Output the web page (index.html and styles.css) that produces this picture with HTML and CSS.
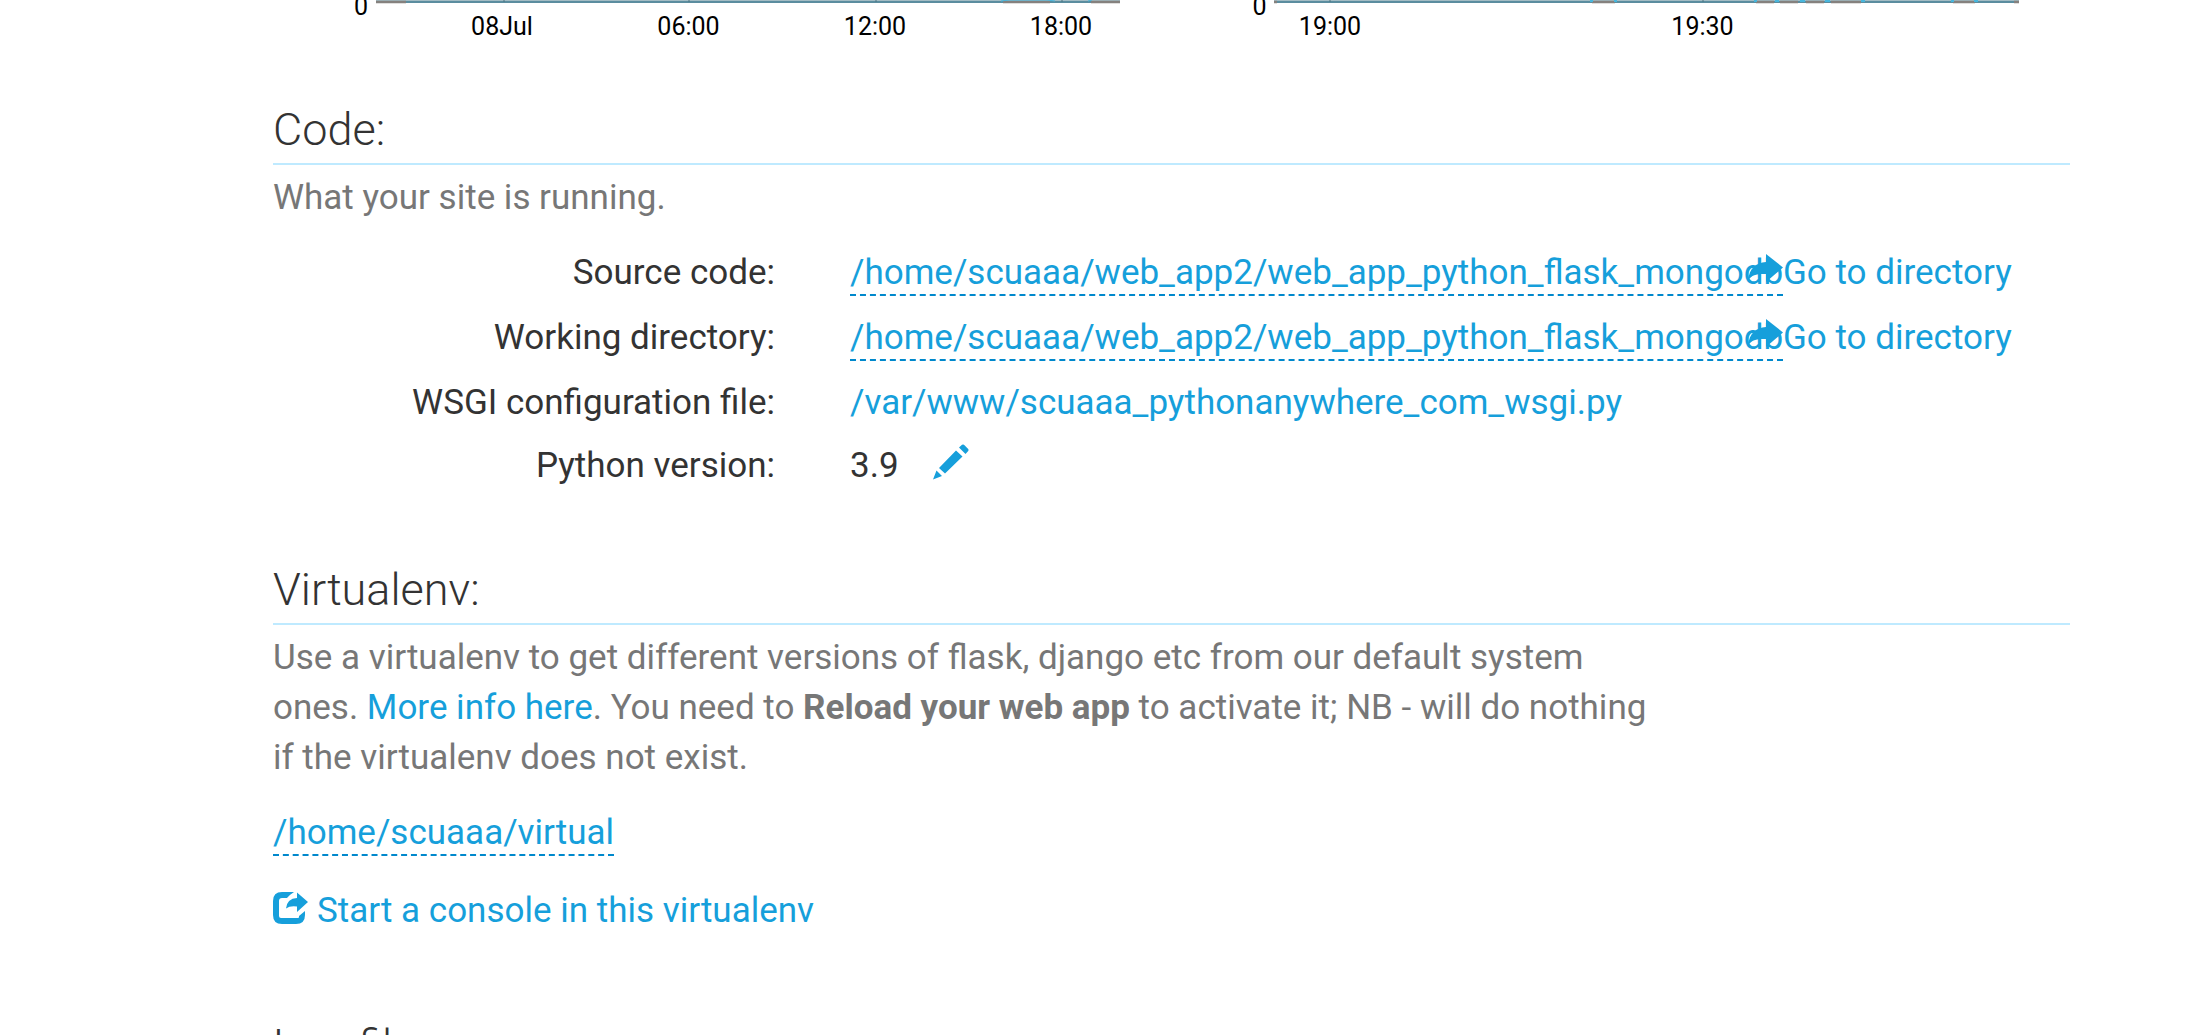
FILE: index.html
```html
<!DOCTYPE html>
<html lang="en">
<head>
<meta charset="utf-8">
<title>Web app configuration</title>
<link rel="stylesheet" href="styles.css">
</head>
<body>
<svg class="sprite" aria-hidden="true">
  <symbol id="arrow" viewBox="0 0 35 30"><path d="M18 1L35 14.500L18 29V21C10 20.500 4 21.500 .3 27C1 15.500 8 9.500 18 9Z"/></symbol>
</svg>
<main class="page">
  <div class="charts">
    <svg class="chart" width="898" height="50" viewBox="273 0 898 50">
      <rect x="376" y="0" width="744" height="1.200" fill="#a3bcc4"/>
      <rect x="376" y="1" width="744" height="2" fill="#5b8d9f"/>
      <path d="M376 2H406M1003 2H1050M1091 2H1120" stroke="#85817e" stroke-width="2.500"/>
      <path d="M1001 1l8-1h38l8 1M1088 1l4-1" stroke="#48b6dc" fill="none"/>
      <path d="M504 0v2M689 0v2M876 0v2M1062 0v2" stroke="#4d7482"/>
      <text x="361" y="15">0</text>
      <text x="502" y="35">08Jul</text>
      <text x="688.500" y="35">06:00</text>
      <text x="875" y="35">12:00</text>
      <text x="1061" y="35">18:00</text>
    </svg>
    <svg class="chart" width="899" height="50" viewBox="1171 0 899 50">
      <rect x="1274" y="0" width="745" height="1.200" fill="#a3bcc4"/>
      <rect x="1274" y="1" width="745" height="2" fill="#5b8d9f"/>
      <path d="M1274 2h3M1592 2h23M1756 2h18M1780 2h18M1806 2h18M1831 2h30M1953 2h22M2014 2h5" stroke="#85817e" stroke-width="2.500"/>
      <path d="M1754 1h3M1775 1h4M1800 1h5M1825 1h5M1861 1h4M1590 1h3M1614 1h3M1951 1h3M1974 1h4" stroke="#48b6dc" stroke-width="2"/>
      <path d="M1330 0v2M1703 0v2" stroke="#4d7482"/>
      <text x="1259.500" y="15">0</text>
      <text x="1330" y="35">19:00</text>
      <text x="1702.500" y="35">19:30</text>
    </svg>
  </div>

  <section class="code">
    <h2>Code:</h2>
    <p class="muted">What your site is running.</p>
    <div class="row">
      <span class="label">Source code:</span>
      <a class="value path editable">/home/scuaaa/web_app2/web_app_python_flask_mongodb</a>
      <a class="goto"><svg class="arrow"><use href="#arrow"/></svg><span>Go to directory</span></a>
    </div>
    <div class="row">
      <span class="label">Working directory:</span>
      <a class="value path editable">/home/scuaaa/web_app2/web_app_python_flask_mongodb</a>
      <a class="goto"><svg class="arrow"><use href="#arrow"/></svg><span>Go to directory</span></a>
    </div>
    <div class="row wsgi">
      <span class="label">WSGI configuration file:</span>
      <a class="value">/var/www/scuaaa_pythonanywhere_com_wsgi.py</a>
    </div>
    <div class="row">
      <span class="label">Python version:</span>
      <span class="value">3.9</span>
      <svg class="pencil" viewBox="0 0 36 36"><path d="M0 35.500L3.500 26.500L9 32ZM6 24L23 6.500L29.500 12.500L12 29.500ZM26 3.500L29 .8Q30 0 31 .8L35.200 5Q36 6 35.200 7L32.500 10Z"/></svg>
    </div>
  </section>

  <section class="virtualenv">
    <h2>Virtualenv:</h2>
    <p class="muted">Use a virtualenv to get different versions of flask, django etc from our default system<br>ones. <a>More info here</a>. You need to <strong>Reload your web app</strong> to activate it; NB - will do nothing<br>if the virtualenv does not exist.</p>
    <p class="env"><a class="editable">/home/scuaaa/virtual</a></p>
    <a class="console"><svg class="share" viewBox="0 0 35 32"><path d="M21 0H9Q0 0 0 9V23Q0 32 9 32H23Q32 32 32 23V19L26 24V25Q26 26 25 26H8Q6 26 6 24V9Q6 6 9 6H14Q17 2.500 21 0ZM24 .500L35 10L24 20V14.500Q17 13.500 13 16.500Q14 6.500 24 6Z"/></svg><span>Start a console in this virtualenv</span></a>
  </section>

  <section class="logs">
    <h2>Log files:</h2>
  </section>
</main>
</body>
</html>
```
FILE: styles.css
```css
* { box-sizing: border-box; }
html, body { margin: 0; height: 1035px; overflow: hidden; background: #fff; }
body { font: 400 35px/50px Roboto, sans-serif; color: #333; }
.sprite { display: none; }
.page { width: 2070px; padding-left: 273px; }
a { color: #169fdb; text-decoration: none; }
svg { flex: none; }
.charts { display: flex; height: 50px; }
.chart { display: block; }
.chart text { font: 25px Roboto, sans-serif; fill: #000; text-anchor: middle; }
h2 { margin: 0; height: 66px; font-size: 45px; line-height: 62px; font-weight: 300; border-bottom: 2px solid #bfeaff; }
p { margin: 0; }
.muted { padding-top: 8px; color: #777; white-space: nowrap; }
.code { padding-top: 49px; height: 509px; }
.row { display: flex; height: 65px; white-space: nowrap; }
.code .muted { margin-bottom: 25px; }
.label { width: 502px; margin-right: 75px; text-align: right; }
.path { width: 933px; }
.editable { height: 48px; border-bottom: 2px dashed #0088cc; }
.wsgi { height: 63px; }
.goto { display: flex; margin-left: -35px; }
.arrow { width: 35px; height: 30px; margin-top: 5px; fill: #169fdb; }
.pencil { width: 36px; height: 36px; margin: 3px 0 0 34px; fill: #169fdb; }
.virtualenv { height: 441px; }
.env { display: flex; padding-top: 25px; }
.console { display: flex; margin-top: 30px; }
.share { width: 35px; height: 32px; margin: 6px 9px 0 0; fill: #169fdb; }
.logs { padding-top: 15px; }
```
